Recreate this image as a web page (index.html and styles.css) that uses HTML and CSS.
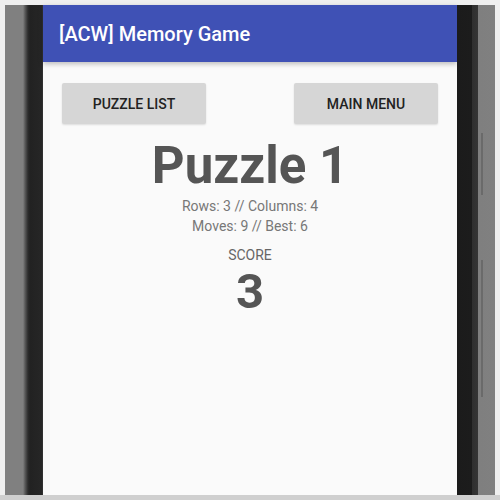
FILE: index.html
```html
<!DOCTYPE html>
<html lang="en">
<head>
  <meta charset="UTF-8">
  <meta name="viewport" content="width=device-width, initial-scale=1.0">
  <title>[ACW] Memory Game</title>
  <link rel="stylesheet" href="styles.css">
</head>
<body>
  <div class="frame">
    <div class="device">
      <div class="bezel bezel-left"></div>

      <div class="screen">
        <header class="app-bar">
          <h1>[ACW] Memory Game</h1>
        </header>

        <main class="content">
          <div class="actions">
            <button class="btn">Puzzle List</button>
            <button class="btn">Main Menu</button>
          </div>

          <h2 class="puzzle-title">Puzzle 1</h2>
          <p class="stats">Rows: 3 // Columns: 4</p>
          <p class="stats">Moves: 9 // Best: 6</p>

          <div class="score">
            <span class="score-label">SCORE</span>
            <span class="score-value">3</span>
          </div>
        </main>
      </div>

      <div class="bezel bezel-right">
        <span class="side-key key-volume"></span>
        <span class="side-key key-power"></span>
      </div>
    </div>
  </div>
</body>
</html>
```

FILE: styles.css
```css
/* Reset */
* {
  margin: 0;
  padding: 0;
  box-sizing: border-box;
}

body {
  width: 500px;
  height: 500px;
  background-color: #cfcfcf;
  font-family: 'Roboto', 'Liberation Sans', sans-serif;
  overflow: hidden;
}

/* Outer light frame */
.frame {
  height: 495px;
  padding: 5px 5px 0 5px;
  background-color: #efefef;
}

.device {
  display: flex;
  height: 100%;
}

/* Phone edges */
.bezel {
  width: 38px;
  flex-shrink: 0;
}

.bezel-left {
  background: linear-gradient(to right,
    #808080 0, #808080 18px,
    #5a5a5a 20px, #2c2c2c 23px,
    #222 25px, #262626 37px, #3a3a3a 38px);
}

.bezel-right {
  position: relative;
  background: linear-gradient(to right,
    #1b1b1b 0, #1c1c1c 15px,
    #2f2f2f 15px, #353535 21px,
    #7f7f7f 21px, #808080 38px);
}

.side-key {
  position: absolute;
  left: 24px;
  width: 2px;
  background-color: #6a6a6a;
}

.key-volume {
  top: 128px;
  height: 62px;
}

.key-power {
  top: 255px;
  height: 137px;
}

/* Screen */
.screen {
  flex: 1;
  display: flex;
  flex-direction: column;
  background-color: #fafafa;
}

.app-bar {
  height: 57px;
  padding-left: 16px;
  display: flex;
  align-items: center;
  background-color: #3f51b5;
  box-shadow: 0 2px 5px rgba(0, 0, 0, 0.25);
  position: relative;
}

.app-bar h1 {
  color: #fff;
  font-size: 20px;
  font-weight: 500;
  padding-top: 1px;
}

.content {
  display: flex;
  flex-direction: column;
  align-items: center;
  padding: 21px 19px 0 19px;
}

.actions {
  width: 100%;
  display: flex;
  justify-content: space-between;
}

.btn {
  width: 144px;
  height: 41px;
  border: none;
  border-radius: 2px;
  background-color: #d6d6d6;
  box-shadow: 0 1px 2px rgba(0, 0, 0, 0.12);
  color: #222;
  font-family: inherit;
  font-size: 14px;
  font-weight: 500;
  text-transform: uppercase;
}

.puzzle-title {
  margin-top: 14px;
  color: #555;
  font-size: 51px;
  font-weight: 700;
  line-height: 56px;
}

.stats {
  color: #777;
  font-size: 14px;
  line-height: 20px;
}

.puzzle-title + .stats {
  margin-top: 2px;
}

.score {
  margin-top: 11px;
  display: flex;
  flex-direction: column;
  align-items: center;
}

.score-label {
  color: #666;
  font-size: 14px;
  line-height: 17px;
}

.score-value {
  color: #555;
  font-size: 49px;
  font-weight: 700;
  line-height: 57px;
  margin-top: -1px;
}
```
